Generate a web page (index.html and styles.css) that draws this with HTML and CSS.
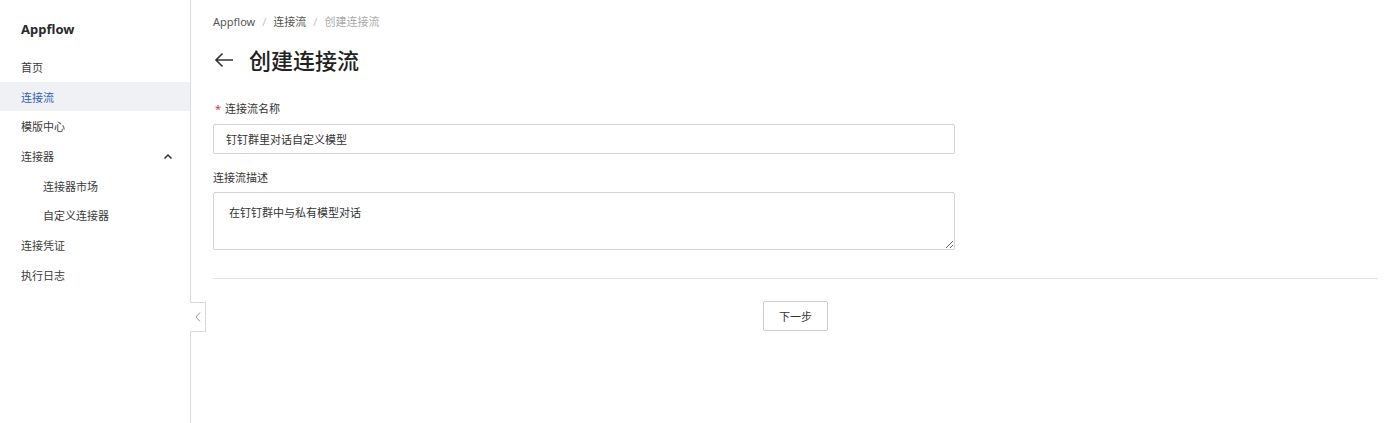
FILE: index.html
```html
<!DOCTYPE html>
<html lang="zh-CN">
<head>
	<meta charset="UTF-8">
	<title>创建连接流 - Appflow</title>
	<link rel="stylesheet" href="styles.css">
</head>
<body>

<div class="layout">
	<aside class="sidebar">
		<div class="brand">Appflow</div>
		<ul class="menu">
			<li class="menu-item">首页</li>
			<li class="menu-item active">连接流</li>
			<li class="menu-item">模版中心</li>
			<li class="menu-item group">
				<span>连接器</span>
				<svg class="chevron" width="10" height="10" viewBox="0 0 10 10"><path d="M1.5 6.5 L5 3 L8.5 6.5" fill="none" stroke="#333" stroke-width="1.5"/></svg>
			</li>
			<li class="menu-item sub">连接器市场</li>
			<li class="menu-item sub">自定义连接器</li>
			<li class="menu-item">连接凭证</li>
			<li class="menu-item">执行日志</li>
		</ul>
		<div class="collapse">
			<svg width="8" height="12" viewBox="0 0 8 12"><path d="M6 1.5 L2 6 L6 10.5" fill="none" stroke="#999" stroke-width="1"/></svg>
		</div>
	</aside>

	<main class="main">
		<div class="breadcrumb">
			<a href="#">Appflow</a>
			<span class="sep">/</span>
			<a href="#">连接流</a>
			<span class="sep">/</span>
			<span class="current">创建连接流</span>
		</div>

		<div class="title-row">
			<svg class="back" width="20" height="16" viewBox="0 0 20 16"><path d="M19 8 H2 M8.5 1.5 L2 8 L8.5 14.5" fill="none" stroke="#333" stroke-width="1.6"/></svg>
			<h1>创建连接流</h1>
		</div>

		<form class="form">
			<label class="label"><span class="req">*</span>连接流名称</label>
			<input class="input" type="text" value="钉钉群里对话自定义模型">

			<label class="label">连接流描述</label>
			<textarea class="textarea">在钉钉群中与私有模型对话</textarea>
		</form>

		<div class="divider"></div>

		<div class="actions">
			<button class="btn">下一步</button>
		</div>
	</main>
</div>

</body>
</html>
```

FILE: styles.css
```css
*{
	margin: 0;
	padding: 0;
	box-sizing: border-box;
}
body{
	font-family: "Noto Sans", "Noto Sans CJK SC", sans-serif;
	font-size: 11px;
	color: #333;
	background: #fff;
}
.layout{
	display: flex;
	min-height: 423px;
}

.sidebar{
	position: relative;
	width: 191px;
	flex-shrink: 0;
	border-right: 1px solid #d9d9d9;
}
.brand{
	padding: 20px 0 0 21px;
	height: 52px;
	font-size: 13px;
	font-weight: bold;
	line-height: 18px;
	color: #2a2a2a;
}
.menu{
	list-style: none;
}
.menu-item{
	display: flex;
	align-items: center;
	justify-content: space-between;
	height: 29.7px;
	padding: 2px 17px 0 21px;
	line-height: 18px;
	color: #3a3a3a;
}
.menu-item.active{
	background: #eff1f5;
	color: #2c5fb8;
}
.menu-item.sub{
	padding-left: 43px;
}
.chevron{
	display: block;
}
.collapse{
	position: absolute;
	top: 302px;
	right: -16px;
	width: 16px;
	height: 30px;
	border: 1px solid #d9d9d9;
	border-left: none;
	background: #fff;
	display: flex;
	align-items: center;
	justify-content: center;
}

.main{
	flex: 1;
	padding: 12px 22px 0 22px;
}
.breadcrumb{
	display: flex;
	align-items: center;
	height: 18px;
	padding-top: 1px;
	line-height: 18px;
	color: #555;
}
.breadcrumb a{
	color: #555;
	text-decoration: none;
}
.breadcrumb .sep{
	margin: 0 7px;
	color: #c4c4c4;
}
.breadcrumb .current{
	color: #aaa;
}
.title-row{
	display: flex;
	align-items: center;
	margin-top: 18px;
	height: 24px;
}
.back{
	margin-left: 1px;
	margin-right: 15px;
}
.title-row h1{
	font-size: 22px;
	font-weight: 500;
	line-height: 24px;
	color: #222;
}

.form{
	display: flex;
	flex-direction: column;
	width: 742px;
	margin-top: 28px;
}
.label{
	line-height: 18px;
	height: 18px;
	color: #333;
}
.req{
	color: #d9363e;
	margin: 0 4px 0 2px;
}
.input{
	margin-top: 6px;
	height: 30px;
	padding: 0 12px;
	border: 1px solid #d4d4d4;
	border-radius: 2px;
	font: inherit;
	color: #333;
	outline: none;
}
.input + .label{
	margin-top: 15px;
}
.textarea{
	margin-top: 5px;
	height: 58px;
	padding: 11px 15px;
	border: 1px solid #d4d4d4;
	border-radius: 2px;
	font: inherit;
	line-height: 18px;
	color: #333;
	resize: vertical;
	outline: none;
}

.divider{
	margin-top: 28px;
	border-top: 1px solid #e3e3e3;
}
.actions{
	display: flex;
	justify-content: center;
	margin-top: 22px;
}
.btn{
	width: 65px;
	height: 30px;
	border: 1px solid #ccc;
	border-radius: 2px;
	background: #fff;
	font: inherit;
	color: #333;
	cursor: pointer;
}
```
